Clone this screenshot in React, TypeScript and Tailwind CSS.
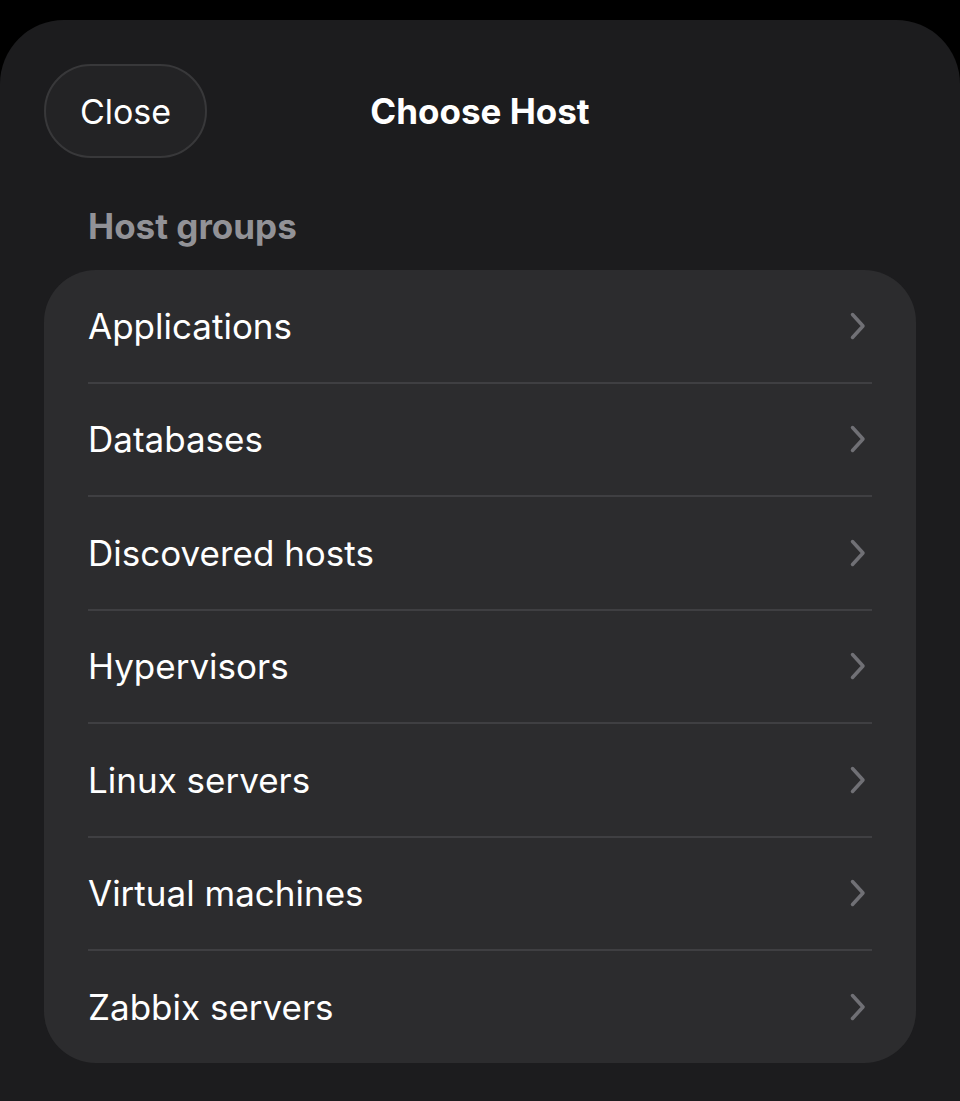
const groups = [
  "Applications",
  "Databases",
  "Discovered hosts",
  "Hypervisors",
  "Linux servers",
  "Virtual machines",
  "Zabbix servers",
];

function Chevron() {
  return (
    <svg width="16" height="28" viewBox="0 0 16 28" fill="none" className="shrink-0">
      <path
        d="M2.5 2.5 L13 14 L2.5 25.5"
        stroke="#707075"
        strokeWidth="3.5"
        strokeLinecap="round"
        strokeLinejoin="round"
      />
    </svg>
  );
}

export default function App() {
  return (
    <div
      className="min-h-[1101px] w-[960px] bg-black pt-5"
      style={{ fontFamily: "Inter, 'Noto Sans', sans-serif" }}
    >
      <div className="h-[1081px] rounded-t-[64px] bg-[#1c1c1e] px-11 pt-11">
        <div className="relative flex h-[94px] items-center">
          <button className="flex h-[94px] w-[163px] items-center justify-center rounded-full border-2 border-[#38383a] bg-[#232325] text-[34px] text-white">
            Close
          </button>
          <h1 className="absolute left-1/2 -translate-x-1/2 text-[35px] font-bold text-white">
            Choose Host
          </h1>
        </div>

        <div className="mt-[46px] pl-11 text-[35px] font-bold leading-[44px] text-[#929297]">
          Host groups
        </div>

        <div className="mt-[22px] overflow-hidden rounded-[52px] bg-[#2c2c2e]">
          {groups.map((name, i) => (
            <div key={name} className="px-11">
              <div className="flex h-[111.5px] items-center justify-between pr-[6px]">
                <span className="text-[35px] text-white">{name}</span>
                <Chevron />
              </div>
              {i < groups.length - 1 && <div className="h-[2px] bg-[#3f3f42]" />}
            </div>
          ))}
        </div>
      </div>
    </div>
  );
}
